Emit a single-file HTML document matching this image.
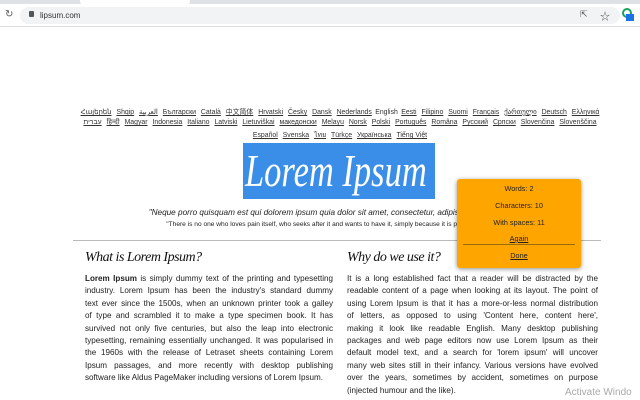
<!DOCTYPE html>
<html><head><meta charset="utf-8"><style>
*{margin:0;padding:0;box-sizing:border-box}
body{width:640px;height:400px;overflow:hidden;background:#fff;font-family:"Liberation Sans","Noto Sans CJK SC",sans-serif;position:relative}
.tab{position:absolute;left:0;top:0;width:640px;height:5px;background:#dee1e6}
.tab i{position:absolute;left:80px;top:0;width:110px;height:5px;background:#fff;border-radius:0 0 4px 4px}
.bar{position:absolute;left:0;top:4px;width:640px;height:23px;background:#fff;border-bottom:1px solid #dadce0}
.url{position:absolute;left:20px;top:3px;width:600px;height:17px;background:#f1f3f4;border-radius:9px;font-size:8px;color:#333;padding:4px 0 0 20px}
.abs{position:absolute}
.langs{position:absolute;left:60px;width:560px;text-align:center;font-size:6.9px;color:#333;white-space:nowrap}
.langs u{margin:0 1.5px}
.lorem{position:absolute;left:243px;top:143px;width:192px;height:56px;background:#3b8ee8;color:#fff;font-family:"Liberation Serif",serif;font-style:italic;font-size:46px;line-height:56px;overflow:hidden;white-space:nowrap}
.lorem span{display:inline-block;transform:scaleX(0.75);transform-origin:0 0;margin-left:2px}
.q{position:absolute;width:640px;text-align:center;white-space:nowrap;color:#222}
.col{position:absolute;width:248px;font-size:8.1px;color:#222;line-height:12.4px}
.col div{text-align:justify;text-align-last:justify;white-space:nowrap;overflow:hidden}
.col div.l{text-align-last:left}
h2{position:absolute;font-family:"Liberation Serif",serif;font-style:italic;font-weight:normal;font-size:14px;letter-spacing:-0.5px;color:#111;white-space:nowrap}
.pop{position:absolute;left:457px;top:179px;width:124px;height:89px;background:#ffa500;border-radius:3px;box-shadow:0 1px 5px rgba(0,0,0,.45);font-size:7.3px;color:#222;text-align:center}
.pop p{position:absolute;width:100%}
</style></head><body>
<div class="tab"><i></i></div>
<div class="bar">
<div class="abs" style="left:5px;top:5px;font-size:10px;color:#555">&#8635;</div>
<div class="url"><span class="abs" style="left:9px;top:4px;width:5px;height:6px;background:#555;border-radius:1px"></span>lipsum.com</div>
<div class="abs" style="left:580px;top:5px;font-size:9px;color:#555">&#8689;</div>
<div class="abs" style="left:600px;top:4px;font-size:10px;color:#555">&#9734;</div>
<div class="abs" style="left:622px;top:4px;width:10px;height:10px;border:2px solid #1aa260;border-radius:50%"></div>
<div class="abs" style="left:626px;top:10px;width:8px;height:7px;background:#1a73e8"></div>
</div>
<div class="langs" style="top:106px"><u>Հայերեն</u> <u>Shqip</u> <u>العربية</u> <u>Български</u> <u>Català</u> <u>中文简体</u> <u>Hrvatski</u> <u>Česky</u> <u>Dansk</u> <u>Nederlands</u> English <u>Eesti</u> <u>Filipino</u> <u>Suomi</u> <u>Français</u> <u>ქართული</u> <u>Deutsch</u> <u>Ελληνικά</u></div>
<div class="langs" style="top:118px"><u>עברית</u> <u>हिन्दी</u> <u>Magyar</u> <u>Indonesia</u> <u>Italiano</u> <u>Latviski</u> <u>Lietuviškai</u> <u>македонски</u> <u>Melayu</u> <u>Norsk</u> <u>Polski</u> <u>Português</u> <u>Româna</u> <u>Pyccкий</u> <u>Српски</u> <u>Slovenčina</u> <u>Slovenščina</u></div>
<div class="langs" style="top:130px"><u>Español</u> <u>Svenska</u> <u>ไทย</u> <u>Türkçe</u> <u>Українська</u> <u>Tiếng Việt</u></div>
<div class="lorem"><span>Lorem Ipsum</span></div>
<div class="q" style="top:208px;font-size:8.2px;font-style:italic">"Neque porro quisquam est qui dolorem ipsum quia dolor sit amet, consectetur, adipisci velit..."</div>
<div class="q" style="top:221px;font-size:6.6px">"There is no one who loves pain itself, who seeks after it and wants to have it, simply because it is pain..."</div>
<div class="abs" style="left:73px;top:240px;width:528px;height:1px;background:#bbb"></div>
<h2 style="left:85px;top:250px">What is Lorem Ipsum?</h2>
<h2 style="left:347px;top:250px">Why do we use it?</h2>
<div class="col" style="left:85px;top:273px">
<div><b>Lorem Ipsum</b> is simply dummy text of the printing and typesetting</div>
<div>industry. Lorem Ipsum has been the industry's standard dummy</div>
<div>text ever since the 1500s, when an unknown printer took a galley</div>
<div>of type and scrambled it to make a type specimen book. It has</div>
<div>survived not only five centuries, but also the leap into electronic</div>
<div>typesetting, remaining essentially unchanged. It was popularised in</div>
<div>the 1960s with the release of Letraset sheets containing Lorem</div>
<div>Ipsum passages, and more recently with desktop publishing</div>
<div class="l">software like Aldus PageMaker including versions of Lorem Ipsum.</div>
</div>
<div class="col" style="left:347px;top:273px;width:251px">
<div>It is a long established fact that a reader will be distracted by the</div>
<div>readable content of a page when looking at its layout. The point of</div>
<div>using Lorem Ipsum is that it has a more-or-less normal distribution</div>
<div>of letters, as opposed to using 'Content here, content here',</div>
<div>making it look like readable English. Many desktop publishing</div>
<div>packages and web page editors now use Lorem Ipsum as their</div>
<div>default model text, and a search for 'lorem ipsum' will uncover</div>
<div>many web sites still in their infancy. Various versions have evolved</div>
<div>over the years, sometimes by accident, sometimes on purpose</div>
<div class="l">(injected humour and the like).</div>
</div>
<div class="abs" style="left:565px;top:387px;font-size:10px;color:#aaa;white-space:nowrap">Activate Windo</div>
<div class="pop">
<p style="top:5px">Words: 2</p>
<p style="top:22px">Characters: 10</p>
<p style="top:39px">With spaces: 11</p>
<p style="top:55px"><u>Again</u></p>
<div class="abs" style="left:6px;top:65px;width:112px;height:1px;background:#9a6a10"></div>
<p style="top:72px"><u>Done</u></p>
</div>
</body></html>
